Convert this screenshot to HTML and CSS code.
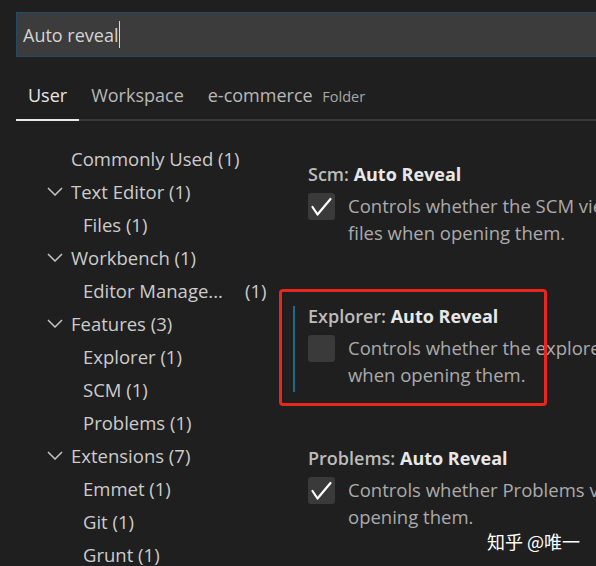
FILE: index.html
```html
<!DOCTYPE html>
<html>
<head>
<meta charset="utf-8">
<link rel="stylesheet" href="styles.css">
</head>
<body>
<div class="page">
  <div class="search"><span class="query">Auto reveal</span><span class="caret"></span></div>
  <div class="tabs">
    <div class="tab active">User</div>
    <div class="tab">Workspace</div>
    <div class="tab">e-commerce <span class="folder">Folder</span></div>
  </div>
  <div class="content">
    <nav class="tree">
      <div class="row top nochev">Commonly Used (1)</div>
      <div class="row top"><span class="chev"><svg viewBox="0 0 16 9" width="16" height="9"><path d="M1 1 L8 8 L15 1" fill="none" stroke="#c5c5c5" stroke-width="1.5"/></svg></span>Text Editor (1)</div>
      <div class="row child">Files (1)</div>
      <div class="row top"><span class="chev"><svg viewBox="0 0 16 9" width="16" height="9"><path d="M1 1 L8 8 L15 1" fill="none" stroke="#c5c5c5" stroke-width="1.5"/></svg></span>Workbench (1)</div>
      <div class="row child"><span class="trunc">Editor Manage...</span><span class="count">(1)</span></div>
      <div class="row top"><span class="chev"><svg viewBox="0 0 16 9" width="16" height="9"><path d="M1 1 L8 8 L15 1" fill="none" stroke="#c5c5c5" stroke-width="1.5"/></svg></span>Features (3)</div>
      <div class="row child">Explorer (1)</div>
      <div class="row child">SCM (1)</div>
      <div class="row child">Problems (1)</div>
      <div class="row top"><span class="chev"><svg viewBox="0 0 16 9" width="16" height="9"><path d="M1 1 L8 8 L15 1" fill="none" stroke="#c5c5c5" stroke-width="1.5"/></svg></span>Extensions (7)</div>
      <div class="row child">Emmet (1)</div>
      <div class="row child">Git (1)</div>
      <div class="row child">Grunt (1)</div>
    </nav>
    <main class="settings">
      <section class="setting">
        <div class="title"><span class="cat">Scm: </span><span class="key">Auto Reveal</span></div>
        <div class="value">
          <span class="checkbox checked"><svg viewBox="0 0 27 27" width="27" height="27"><path d="M4.5 14 L9.5 21.5 L22.5 6" fill="none" stroke="#ffffff" stroke-width="2.2" stroke-linecap="round" stroke-linejoin="round"/></svg></span>
          <div class="desc">Controls whether the SCM view should automatically reveal and select<br>files when opening them.</div>
        </div>
      </section>
      <section class="setting focused">
        <div class="title"><span class="cat">Explorer: </span><span class="key">Auto Reveal</span></div>
        <div class="value">
          <span class="checkbox"></span>
          <div class="desc">Controls whether the explorer should automatically reveal and select files<br>when opening them.</div>
        </div>
        <div class="highlight"></div>
      </section>
      <section class="setting">
        <div class="title"><span class="cat">Problems: </span><span class="key">Auto Reveal</span></div>
        <div class="value">
          <span class="checkbox checked"><svg viewBox="0 0 27 27" width="27" height="27"><path d="M4.5 14 L9.5 21.5 L22.5 6" fill="none" stroke="#ffffff" stroke-width="2.2" stroke-linecap="round" stroke-linejoin="round"/></svg></span>
          <div class="desc">Controls whether Problems view should automatically reveal files when<br>opening them.</div>
        </div>
      </section>
    </main>
  </div>
  <div class="watermark">知乎 @唯一</div>
</div>
</body>
</html>
```
FILE: styles.css
```css
html, body {
  margin: 0;
  padding: 0;
  background: #1f1f1f;
  overflow: hidden;
}
.page {
  position: relative;
  width: 596px;
  height: 566px;
  overflow: hidden;
  background: #1f1f1f;
  font-family: "Open Sans", "Noto Sans", sans-serif;
  color: #cccccc;
  padding: 12px 0 0 16px;
  box-sizing: border-box;
}
.search {
  width: 700px;
  height: 45px;
  box-sizing: border-box;
  border: 1px solid #234d66;
  background: #3c3c3c;
  display: flex;
  align-items: center;
  padding-left: 6px;
  font-size: 18px;
  color: #d4d4d4;
}
.caret {
  display: inline-block;
  width: 1px;
  height: 27px;
  background: #d8d8d8;
  margin-left: 1px;
}
.tabs {
  margin-top: 15px;
  width: 700px;
  display: flex;
  border-bottom: 2px solid #3a3a3a;
  height: 47px;
  box-sizing: content-box;
}
.tab {
  padding: 0 12px;
  font-size: 18px;
  line-height: 47px;
  color: #b8b8b8;
  position: relative;
  white-space: nowrap;
}
.tab.active {
  color: #e6e6e6;
}
.tab.active::after {
  content: "";
  position: absolute;
  left: 0;
  right: 0;
  bottom: -2px;
  height: 2px;
  background: #e8e8e8;
}
.folder {
  font-size: 14.5px;
  color: #a8a8a8;
  margin-left: 5px;
}
.content {
  display: grid;
  grid-template-columns: 277px 1fr;
  margin-top: 21px;
}
.tree {
  font-size: 18.5px;
}
.row {
  height: 33px;
  line-height: 33px;
  white-space: nowrap;
  display: flex;
  align-items: center;
}
.row.top {
  padding-left: 31px;
}
.row.top.nochev {
  padding-left: 55px;
}
.row.child {
  padding-left: 67px;
}
.chev {
  width: 24px;
  height: 33px;
  display: flex;
  align-items: center;
  justify-content: flex-start;
}
.trunc {
  width: 162px;
}
.settings {
  white-space: nowrap;
}
.setting {
  position: relative;
  border-left: 2px solid transparent;
  padding: 0 0 4px 13px;
  margin-bottom: 56px;
}
.setting:first-child {
  margin-top: 22px;
}
.setting.focused {
  border-left-color: #1b6b8a;
}
.title {
  font-size: 18px;
  line-height: 20px;
  font-weight: 600;
  margin-bottom: 8px;
}
.cat {
  color: #bcbcbc;
}
.key {
  color: #e8e8e8;
  font-weight: 700;
}
.value {
  display: flex;
  align-items: flex-start;
}
.checkbox {
  flex: none;
  width: 27px;
  height: 27px;
  margin-top: 1px;
  border-radius: 3px;
  background: #3a3a3a;
  margin-right: 13px;
  display: block;
}
.checkbox svg {
  display: block;
}
.desc {
  font-size: 18.5px;
  line-height: 27px;
  color: #ababab;
}
.highlight {
  position: absolute;
  left: -16px;
  top: -17px;
  width: 268px;
  height: 117px;
  box-sizing: border-box;
  border: 3px solid #e8261d;
  border-radius: 4px;
}
.watermark {
  position: absolute;
  left: 487px;
  top: 529px;
  font-family: "Noto Sans CJK SC", sans-serif;
  font-size: 18px;
  line-height: 24px;
  color: #ffffff;
}
```
